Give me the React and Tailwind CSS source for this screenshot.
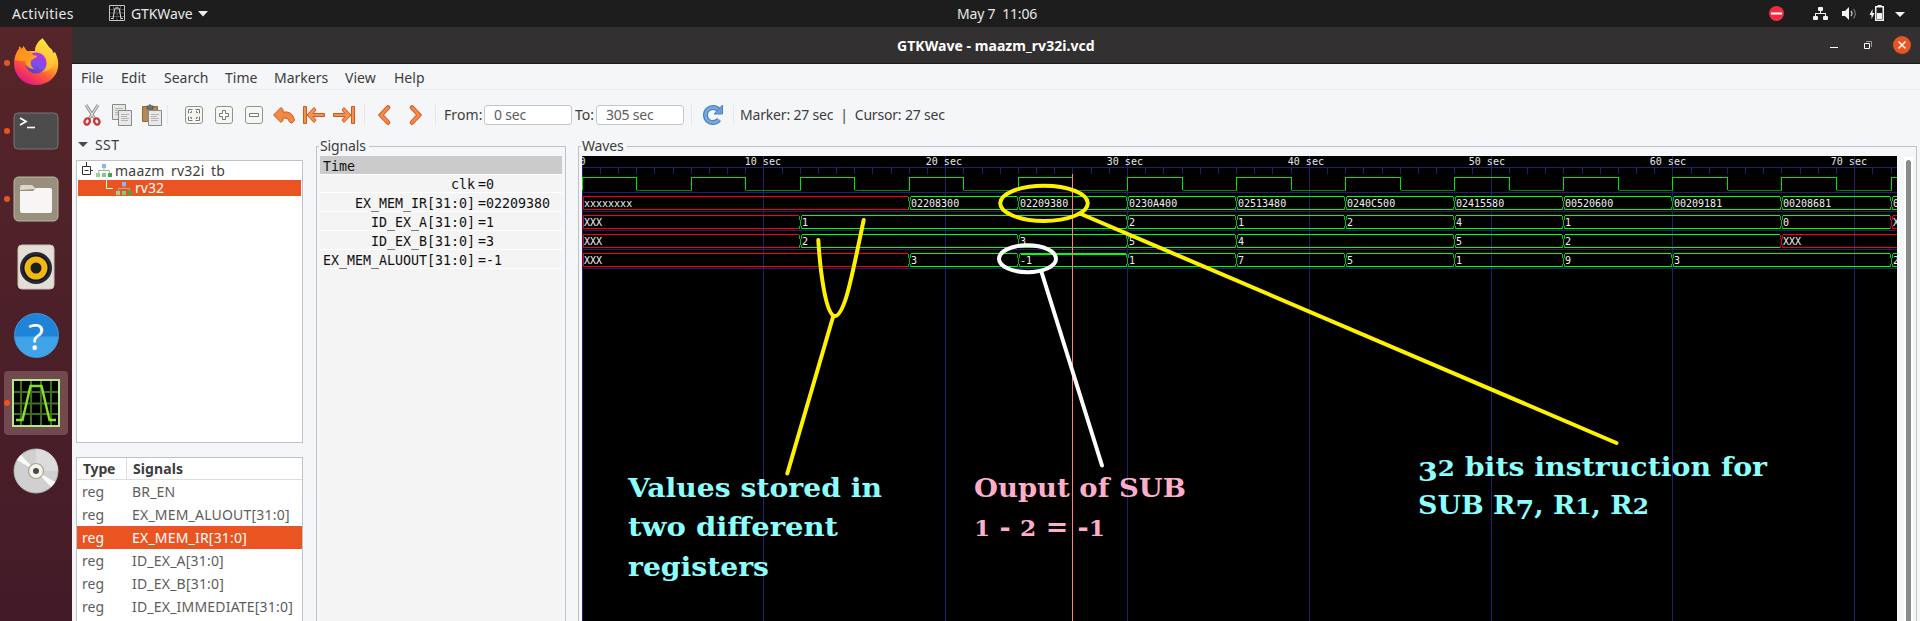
import React from "react";

const PX = 18.18;
const tx = (t) => Math.floor(582.1 + PX * t) + 0.5;
const END = 1896.5;

const buses = [
  {
    top: 196.5,
    segs: [[0, "xxxxxxxx", 1], [18, "02208300"], [24, "02209380"], [30, "0230A400"], [36, "02513480"], [42, "0240C500"], [48, "02415580"], [54, "00520600"], [60, "00209181"], [66, "00208681"], [72, "0"]],
  },
  { top: 215.5, segs: [[0, "XXX", 1], [12, "1"], [30, "2"], [36, "1"], [42, "2"], [48, "4"], [54, "1"], [66, "0"], [72, "X", 1]] },
  { top: 234.5, segs: [[0, "XXX", 1], [12, "2"], [24, "3"], [30, "5"], [36, "4"], [48, "5"], [54, "2"], [66, "XXX", 1]] },
  { top: 253.5, segs: [[0, "XXX", 1], [18, "3"], [24, "-1"], [30, "1"], [36, "7"], [42, "5"], [48, "1"], [54, "9"], [60, "3"], [72, "2"]] },
];

function Bus({ top, segs }) {
  const bot = top + 13;
  return (
    <g>
      {segs.map(([t, label, bad], i) => {
        const x = tx(t);
        const last = i === segs.length - 1;
        const e = last ? END : tx(segs[i + 1][0]) - 1.5;
        const s = i === 0 ? x : x + 1.5;
        const c = bad ? "#ff0000" : "#00ff00";
        const dim = bad ? "#e00000" : "#00c000";
        return (
          <g key={t}>
            <path d={`M${s} ${top}H${e}M${s} ${bot}H${e}`} stroke={c} />
            {i > 0 ? (
              <path
                d={`M${x - 1} ${top}V${top + 4}M${x} ${top + 4}V${bot - 3}M${x - 1} ${bot - 3}V${bot}M${x + 1} ${top}V${top + 4}M${x + 1} ${bot - 3}V${bot}`}
                stroke={dim}
              />
            ) : (
              <path d={`M${x + 0.5} ${top}V${bot}`} stroke={dim} />
            )}
            <text x={x + 1.5} y={top + 10.5} fill="#f2f2f2" stroke="none">{label}</text>
          </g>
        );
      })}
    </g>
  );
}

function Waves() {
  let clk = `M${tx(0)} 190.5`;
  const lows = [];
  for (let t = 0; t <= 72; t += 6) {
    clk += `M${tx(t)} 190V177.5H${Math.min(tx(t + 3), END)}`;
    if (t < 72) {
      clk += `V190`;
      lows.push(`M${tx(t + 3)} 190.5H${tx(t + 6)}`);
    }
  }
  const ticks = Array.from({ length: 73 }, (_, i) => i);
  const decades = [0, 10, 20, 30, 40, 50, 60, 70];
  return (
    <svg className="block bg-black" width="1315" height="465" viewBox="582 156 1315 465" fill="none">
      <g stroke="#20206f" shapeRendering="crispEdges">
        <path d="M582 167.5H1897M582 192.5H1897M582 211.5H1897M582 230.5H1897M582 249.5H1897M582 268.5H1897" />
        {ticks.map((t) => (
          <path key={t} d={`M${tx(t)} 167V174`} />
        ))}
        {decades.map((t) => (
          <path key={t} d={`M${tx(t)} 156V621`} />
        ))}
      </g>
      <g shapeRendering="crispEdges" className="font-['DejaVu_Sans_Mono',monospace] text-[10px]">
        {decades.map((t) => (
          <text key={t} x={t === 0 ? 579.5 : 563.8 + 18.1 * t} y="165" fill="#e8e8e8">{t === 0 ? "0" : `${t} sec`}</text>
        ))}
        <path d={clk} stroke="#00e600" />
        <path d={lows.join("")} stroke="#008800" />
        {buses.map((b) => (
          <Bus key={b.top} {...b} />
        ))}
        <path d={`M${tx(24) + 2} 254.5H${tx(30) - 1}`} stroke="#00ff00" />
        <path d="M1072.5 174V621" stroke="#ff8080" />
      </g>
      <g stroke="#fff200" strokeWidth="4" strokeLinecap="round">
        <ellipse cx="1044" cy="203.3" rx="43.8" ry="17.6" />
        <path d="M1081 214L1616.500 443" />
        <path d="M818.300 240C820 268 825 312 834 316C845 318 853 270 863.700 220" />
        <path d="M833 317L787.300 473.500" />
      </g>
      <g stroke="#ffffff" strokeWidth="4" strokeLinecap="round">
        <ellipse cx="1027.500" cy="258.700" rx="28.500" ry="13.500" />
        <path d="M1041.500 272L1102 465.500" />
      </g>
      <g className="font-['DejaVu_Serif',serif] text-[26.5px] font-bold" fill="#8cffff">
        <text x="628" y="497" textLength="254" lengthAdjust="spacingAndGlyphs">Values stored in</text>
        <text x="628" y="536" textLength="210" lengthAdjust="spacingAndGlyphs">two different</text>
        <text x="628" y="576" textLength="141" lengthAdjust="spacingAndGlyphs">registers</text>
        <text x="1418" y="475.500" textLength="349" lengthAdjust="spacingAndGlyphs">
          <tspan dy="5.5">3</tspan><tspan dy="-5.5" fontSize="23">2</tspan> bits instruction for
        </text>
        <text x="1418" y="514" textLength="231" lengthAdjust="spacingAndGlyphs">
          SUB R<tspan dy="5">7</tspan><tspan dy="-5">, R</tspan><tspan fontSize="23">1</tspan>, R<tspan fontSize="23">2</tspan>
        </text>
        <g fill="#ffaec9">
          <text x="974" y="497" textLength="212" lengthAdjust="spacingAndGlyphs">Ouput of SUB</text>
          <text x="974" y="536" textLength="131" lengthAdjust="spacingAndGlyphs">
            <tspan fontSize="23">1</tspan> - <tspan fontSize="23">2</tspan> = -<tspan fontSize="23">1</tspan>
          </text>
        </g>
      </g>
    </svg>
  );
}

function TopBar() {
  return (
    <header className="flex h-[27px] shrink-0 items-center bg-[#1d1d1d] text-[14px] leading-[22px] text-[#e8e8e8]">
      <span className="w-[97px] pl-3 tracking-[0.35px]">Activities</span>
      <svg className="ml-3 mt-[-1px]" width="16" height="16" fill="none">
        <path d="M.5.5h15v15H.5z" fill="#111" stroke="#c8c8c8" />
        <path d="M4.500 1v14M8 1v14M11.500 1v14M1 4.500h14M1 8h14M1 11.500h14" stroke="#555" />
        <path d="M2 13.500h2L6 3h4l2 10.500h2" stroke="#ddd" />
      </svg>
      <span className="ml-[6px] w-[67px] tracking-[-0.1px]">GTKWave</span>
      <svg width="10" height="6"><path d="M0 0h10L5 5.500z" fill="#eee" /></svg>
      <span className="ml-[749px] w-[120px] whitespace-pre tracking-[-0.2px]">May 7  11:06</span>
      <svg className="ml-auto" width="151" height="26" viewBox="1769 0 151 26">
        <circle cx="1776.500" cy="12.500" r="7.500" fill="#f22c42" />
        <path d="M1771 11.500h11v2h-11z" fill="#fff" />
        <g fill="#f2f2f2">
          <rect x="1818" y="6" width="5" height="4" rx="1" />
          <rect x="1813" y="15" width="5" height="4" rx="1" />
          <rect x="1823" y="15" width="5" height="4" rx="1" />
          <path d="M1815 15v-3h5v-2h1v2h5v3h-1v-2h-9v2z" />
          <path d="M1842 10h3l4-4v13l-4-4h-3z" />
          <path d="M1875 5h9v15h-9zM1876.500 6.500v12h6v-12z" fillRule="evenodd" />
          <path d="M1877 12h5v6h-5zM1877.500 4h4v1h-4zM1872.500 8l-3 6h2v4l3-6h-2z" />
          <path d="M1895 11h10l-5 5z" />
        </g>
        <path d="M1851 10q2 2.500 0 5" stroke="#ccc" fill="none" strokeWidth="1.300" />
        <path d="M1853.500 8q3.500 4.500 0 9.500" stroke="#777" fill="none" strokeWidth="1.200" />
      </svg>
    </header>
  );
}

function Firefox() {
  return (
    <svg className="-mt-[3px]" width="46" height="47" viewBox="0 0 46 47">
      <defs>
        <linearGradient id="ffBody" x1="0.85" y1="0.1" x2="0.3" y2="1">
          <stop offset="0" stopColor="#fff44f" />
          <stop offset=".35" stopColor="#ffb52b" />
          <stop offset=".65" stopColor="#ff5a36" />
          <stop offset="1" stopColor="#e31587" />
        </linearGradient>
        <linearGradient id="ffGlobe" x1=".7" y1="0" x2=".3" y2="1">
          <stop offset="0" stopColor="#b833e1" />
          <stop offset=".6" stopColor="#7b4fe8" />
          <stop offset="1" stopColor="#5b3fb5" />
        </linearGradient>
        <linearGradient id="ffHead" x1="0" y1="0" x2="1" y2="1">
          <stop offset="0" stopColor="#ff8a16" />
          <stop offset="1" stopColor="#ffa92b" />
        </linearGradient>
      </defs>
      <path d="M30 1c3 3 4 6 7 9 2 1 3 3 3 5l2-1c2 4 4 9 3 15-1 10-10 18-22 18S1 38 1 25c0-6 2-10 5-14l0-3 3 3 1-2v-1c2 1 2 3 4 5l8 0c0-5 3-10 8-13z" fill="url(#ffBody)" />
      <circle cx="23" cy="25" r="10.500" fill="url(#ffGlobe)" />
      <path d="M2 22c0-5 2-9 4-11l1-2 2 3 1-3 4 4c3 0 5 2 6 4 2 1 4 0 4 1 0 2-5 3-6 5-1 4 1 6 3 8-5 0-9-4-9-8-3 0-8 0-10-1z" fill="url(#ffHead)" />
      <path d="M22 13c8 1 12 6 12 12 0 4-2 7-5 9 9-1 13-6 13-12 0-8-9-11-12-20-5 2-8 6-8 11z" fill="#ffd43a" opacity=".6" />
    </svg>
  );
}

function Dock() {
  const items = [
    { dot: true, icon: <Firefox /> },
    {
      dot: true,
      icon: (
        <svg width="46" height="38">
          <rect x="1" y="1" width="44" height="36" rx="4" fill="#4c4c4c" stroke="#777" />
          <path d="M7 6l6 3.500L7 13" fill="none" stroke="#fff" strokeWidth="1.800" />
          <path d="M14 15.500h8" stroke="#fff" strokeWidth="1.600" />
        </svg>
      ),
    },
    {
      dot: true,
      icon: (
        <svg width="46" height="46">
          <rect x="1" y="1" width="44" height="44" rx="4.500" fill="#98907c" stroke="#bdb7a6" />
          <path d="M7 14v-3q0-2 2-2h9q2 0 3 2l2 2z" fill="#dcd8cc" />
          <path d="M7 15h13l3-3h14q2 0 2 2v21q0 2-2 2H9q-2 0-2-2z" fill="#f7f6f4" />
        </svg>
      ),
    },
    {
      icon: (
        <svg width="38" height="46">
          <rect x="1" y="1" width="36" height="44" rx="4" fill="#e4dfd6" stroke="#c9c3b7" />
          <circle cx="19" cy="24" r="16" fill="#262634" />
          <circle cx="19" cy="24" r="13" fill="#111118" />
          <circle cx="19" cy="24" r="11.500" fill="#f0b90f" />
          <circle cx="19" cy="24" r="5.500" fill="#1f1f1f" />
        </svg>
      ),
    },
    {
      icon: (
        <div className="flex size-[45px] items-center justify-center rounded-full border border-[#3f9be0] bg-linear-to-b from-[#1f83d8] from-50% to-[#3fa3e8] to-55% font-['Open_Sans',sans-serif] text-[37px] leading-none text-white">
          ?
        </div>
      ),
    },
    {
      dot: true,
      active: true,
      icon: (
        <svg width="48" height="48" fill="none">
          <path d="M1 1h46v46H1z" fill="#000" stroke="#b5e88a" strokeWidth="2" />
          <path d="M9 2v44M19 2v44M29 2v44M39 2v44M2 13h44M2 24.500h44M2 35h44" stroke="#3d6e1c" strokeWidth="2" />
          <path d="M4 41h6.500L18.500 7h11l8 34H44" stroke="#86e02f" strokeWidth="2.400" />
        </svg>
      ),
    },
    {
      icon: (
        <svg width="46" height="46">
          <circle cx="23" cy="23" r="22" fill="#d0d0d0" stroke="#b5b5b5" />
          <path d="M23 23V1a22 22 0 0122 22z" fill="#dcdcdc" />
          <path d="M23 23L4 12a22 22 0 014-5zM23 23l19 11a22 22 0 01-4 5z" fill="#fafafa" />
          <circle cx="23" cy="23" r="7.500" fill="#f4f2ea" stroke="#a9a28e" strokeWidth="1.200" />
          <circle cx="23" cy="23" r="3" fill="#4a4a4a" />
        </svg>
      ),
    },
  ];
  return (
    <nav className="flex w-[72px] shrink-0 flex-col items-center gap-1 bg-linear-to-b from-[#562529] to-[#431b28] pt-1">
      {items.map((it, i) => (
        <div key={i} className={`flex h-16 w-[68px] items-center ${it.active ? "" : ""}`}>
          <div className={`relative ml-[2px] flex size-16 items-center justify-center rounded ${it.active ? "bg-[#71494f]" : ""}`}>
            {it.dot && <span className="absolute left-0 top-[29px] size-[6px] rounded-full bg-[#e95420]" />}
            {it.icon}
          </div>
        </div>
      ))}
    </nav>
  );
}

function TitleBar() {
  return (
    <div className="flex h-[37px] shrink-0 items-center border-b border-[#1c1b1b] bg-[#333031]">
      <h1 className="ml-[825px] w-[260px] text-[14px] font-bold tracking-[0.05px] text-white">GTKWave - maazm_rv32i.vcd</h1>
      <svg className="ml-auto" width="92" height="20" viewBox="1828 35 92 20">
        <path d="M1830 47h8v1h-8z" fill="#fff" />
        <path d="M1864.500 43.500h5v5h-5z" fill="none" stroke="#fff" />
        <path d="M1866 41.500h5.500v5.500" fill="none" stroke="#999" />
        <circle cx="1902" cy="45" r="9" fill="#e95420" />
        <path d="M1898.500 41.500l7 7m0-7l-7 7" stroke="#fff" strokeWidth="1.500" />
      </svg>
    </div>
  );
}

function MenuBar() {
  return (
    <div className="flex h-[26px] shrink-0 items-center border-b border-[#e9eaec] pl-[9px] pt-[2px] text-[14px] text-[#3d3d3d]">
      <span className="w-10">File</span>
      <span className="w-[43px]">Edit</span>
      <span className="w-[61px]">Search</span>
      <span className="w-[49px]">Time</span>
      <span className="w-[71px]">Markers</span>
      <span className="w-[49px]">View</span>
      <span>Help</span>
    </div>
  );
}

const Sep = ({ className }) => <span className={`h-5 w-px shrink-0 bg-[#e6e7ea] ${className}`} />;

const Cell = ({ children }) => (
  <svg className="shrink-0" width="30" height="24" viewBox="-15 -12 30 24" fill="none">
    {children}
  </svg>
);

const KeyCap = () => <rect x="-8.500" y="-8.500" width="17" height="17" rx="2.500" fill="#f6f6f3" stroke="#92938e" />;

const Page = ({ x, y }) => (
  <g transform={`translate(${x} ${y})`}>
    <path d="M.5.5h13v15H.5z" fill="#e8e8e8" stroke="#888a85" />
    <path d="M3 4.500h8M3 6.500h6M3 8.500h8M3 10.500h7" stroke="#b4b4b4" />
  </g>
);

function ToolBar() {
  return (
    <div className="flex h-[50px] shrink-0 items-center pl-[5px] text-[14px] text-[#3d3d3d]">
      <Cell>
        <path d="M-6-10L3 4M6-10L-3 4" stroke="#888a85" strokeWidth="3" />
        <path d="M-6-10L3 4M6-10L-3 4" stroke="#e4e4e2" strokeWidth="1.200" />
        <ellipse cx="-4.800" cy="6.500" rx="2.600" ry="3.200" transform="rotate(25 -4.800 6.500)" stroke="#cc3a3a" strokeWidth="2.400" />
        <ellipse cx="4.800" cy="6.500" rx="2.600" ry="3.200" transform="rotate(-25 4.800 6.500)" stroke="#cc3a3a" strokeWidth="2.400" />
      </Cell>
      <Cell>
        <Page x={-10} y={-11} />
        <Page x={-4} y={-5} />
      </Cell>
      <Cell>
        <path d="M-9.500-8.500h15v15h-15z" fill="#b08a58" stroke="#8f6a35" />
        <path d="M-5-9h2q1-3 2 0h2v3h-6z" fill="#777" stroke="#555" />
        <Page x={-4} y={-5} />
      </Cell>
      <Sep className="mr-[11px]" />
      <Cell>
        <KeyCap />
        <path d="M-5.500-1.500v-4h4M1.500-5.500h4v4M5.500 1.500v4h-4M-1.500 5.500h-4v-4M-2.500-4v1.500h-1.500M2.500-4v1.500h1.500M2.500 4v-1.500h1.500M-2.500 4v-1.500h-1.500" stroke="#777975" />
      </Cell>
      <Cell>
        <KeyCap />
        <path d="M-1.500-4.500h3v3h3v3h-3v3h-3v-3h-3v-3h3z" fill="#fff" stroke="#777975" />
      </Cell>
      <Cell>
        <KeyCap />
        <path d="M-4.500-1.500h9v3h-9z" fill="#fff" stroke="#777975" />
      </Cell>
      <Cell>
        <path d="M-10.500 0L-3-7.500l2 2v2.500H3q6 1 7.500 8.500l-2.500 2.500-2.500-1Q5 3 1 3h-2v2.500l-2 2z" fill="#ef8a45" stroke="#d9541e" strokeLinejoin="round" />
      </Cell>
      <Cell>
        <path d="M-10.500-8.500h3v17h-3zM-7 0L0-7.500 2-5-1-1.500H10.500v3H-1L2 5 0 7.500z" fill="#f09350" stroke="#d9541e" strokeLinejoin="round" />
      </Cell>
      <Cell>
        <path d="M10.500-8.500h-3v17h3zM7 0L0-7.500-2-5 1-1.500H-10.500v3H1L-2 5 0 7.500z" fill="#f09350" stroke="#d9541e" strokeLinejoin="round" />
      </Cell>
      <Sep className="ml-[5px] mr-[4px]" />
      <Cell>
        <path d="M4-7.500L-3 0 4 7.500" stroke="#d9541e" strokeWidth="4.600" strokeLinecap="round" />
        <path d="M4-7.500L-3 0 4 7.500" stroke="#f18d4a" strokeWidth="2.600" strokeLinecap="round" />
      </Cell>
      <span className="w-[2px]" />
      <Cell>
        <path d="M-4-7.500L3 0-4 7.500" stroke="#d9541e" strokeWidth="4.600" strokeLinecap="round" />
        <path d="M-4-7.500L3 0-4 7.500" stroke="#f18d4a" strokeWidth="2.600" strokeLinecap="round" />
      </Cell>
      <Sep className="ml-[4px] mr-[8px]" />
      <span className="w-10 pb-[2px] tracking-[0.1px]">From:</span>
      <span className="h-5 w-[88px] rounded-[3px] border border-[#c4c6cb] bg-white pl-[9px] leading-[17px] tracking-[-0.2px] text-[#5d5d5d]">0 sec</span>
      <span className="w-6 pb-[2px] pl-[3px]">To:</span>
      <span className="h-5 w-[88px] rounded-[3px] border border-[#c4c6cb] bg-white pl-[9px] leading-[17px] tracking-[-0.2px] text-[#5d5d5d]">305 sec</span>
      <Sep className="ml-[7px] mr-[6px]" />
      <Cell>
        <path d="M6 4.500A7.500 7.500 0 115.500-5" stroke="#4a86c5" strokeWidth="5" />
        <path d="M6 4.500A7.500 7.500 0 115.500-5" stroke="#79aadb" strokeWidth="2.500" />
        <path d="M9.500-10v9H1z" fill="#6b9fd6" stroke="#4a86c5" strokeLinejoin="round" />
      </Cell>
      <Sep className="ml-[5px] mr-[6px]" />
      <span className="whitespace-nowrap pb-[2px] tracking-[-0.18px]">Marker: 27 sec&nbsp; |&nbsp; Cursor: 27 sec</span>
    </div>
  );
}

const TreeIcon = () => (
  <svg width="16" height="14" fill="none">
    <path d="M8 4v3M2.500 9.500V7.500h11v2" stroke="#aaa" />
    <path d="M6 1h4v4H6z" fill="#8bb8e8" />
    <path d="M0 10h4v4H0z" fill="#93d693" />
    <path d="M6 10h4v4H6z" fill="#7fcb7f" />
    <path d="M12 10h4v4h-4z" fill="#43a843" />
  </svg>
);

const rows = ["BR_EN", "EX_MEM_ALUOUT[31:0]", "EX_MEM_IR[31:0]", "ID_EX_A[31:0]", "ID_EX_B[31:0]", "ID_EX_IMMEDIATE[31:0]"];

function Sidebar() {
  return (
    <aside className="flex w-[231px] shrink-0 flex-col pl-1 text-[14px] text-[#3d3d3d]">
      <div className="flex h-[21px] items-center pb-[9px]">
        <svg className="ml-[2px] mr-[7px]" width="10" height="6"><path d="M0 0h10L5 5z" fill="#4a4a4a" /></svg>
        <span className="leading-[14px] tracking-[0.4px]">SST</span>
      </div>
      <div className="h-[283px] shrink-0 border border-[#bfc2c9] bg-white px-px pt-px">
        <div className="flex h-[18px] items-start">
          <svg className="ml-1" width="15" height="16" fill="none">
            <path d="M.5 4.500h8v8h-8zM2.500 8.500h4M4.500 0v4M8.500 8.500H11" stroke="#333" />
          </svg>
          <div className="-ml-px mr-[3px] pt-[1px]"><TreeIcon /></div>
          <span className="h-[15px] overflow-hidden leading-[18px] tracking-[0.22px]">maazm_rv32i_tb</span>
        </div>
        <div className="flex h-4 items-center bg-[#e95420] text-white">
          <svg className="ml-[28px] mr-[3px] self-start" width="7" height="10" fill="none"><path d="M.5 0v8.500H7" stroke="#fff" /></svg>
          <TreeIcon />
          <span className="ml-[3px] leading-4">rv32</span>
        </div>
      </div>
      <div className="mt-[14px] flex flex-1 flex-col overflow-hidden border border-b-0 border-[#bfc2c9] bg-white">
        <div className="flex h-[22px] shrink-0 items-center border-b border-[#dcdde0] font-bold">
          <span className="flex h-full w-[50px] items-center border-r border-[#dcdde0] pl-[6px] tracking-[-0.2px]">Type</span>
          <span className="pl-[6px] tracking-[0.1px]">Signals</span>
        </div>
        {rows.map((r) => (
          <div key={r} className={`flex h-[23px] shrink-0 items-center ${r === "EX_MEM_IR[31:0]" ? "bg-[#e95420] text-white" : "text-[#5d5d5d]"}`}>
            <span className="w-[55px] pl-[5px]">reg</span>
            <span className="tracking-[0.2px]">{r}</span>
          </div>
        ))}
      </div>
    </aside>
  );
}

function Frame({ label, className, children }) {
  return (
    <section className={`flex flex-col ${className}`}>
      <div className="flex h-[17px] shrink-0 items-end">
        <span className="h-[10px] w-[3px] border-l border-t border-[#bfc2c9]" />
        <span className="px-px pb-px pr-[3px] text-[14px] leading-[18px] tracking-[-0.15px] text-[#3d3d3d]">{label}</span>
        <span className="h-[10px] flex-1 border-r border-t border-[#bfc2c9]" />
      </div>
      <div className="flex min-h-0 flex-1 border-x border-[#bfc2c9] pl-[3px]">{children}</div>
    </section>
  );
}

const signals = [
  ["clk", "=0"],
  ["EX_MEM_IR[31:0]", "=02209380"],
  ["ID_EX_A[31:0]", "=1"],
  ["ID_EX_B[31:0]", "=3"],
  ["EX_MEM_ALUOUT[31:0]", "=-1"],
];

function SignalList() {
  return (
    <div className="w-[242px] bg-[#f4f4f4] font-['DejaVu_Sans_Mono',monospace] text-[13.3px] text-[#111]">
      <div className="h-[18px] bg-[#cbcbcb] pl-[3px] leading-[22px]">Time</div>
      {signals.map(([n, v], i) => (
        <div key={n} className={`flex border-t border-white ${i === 0 ? "h-[18px] leading-[20px]" : "h-[19px] leading-[22px]"}`}>
          <span className="w-[155px] text-right">{n}</span>
          <span className="pl-[3px]">{v}</span>
        </div>
      ))}
      <div className="border-t border-white" />
    </div>
  );
}

export default function App() {
  return (
    <div className="flex h-[621px] w-[1920px] flex-col overflow-hidden bg-[#f5f6f7] font-['Noto_Sans',sans-serif]">
      <TopBar />
      <div className="flex min-h-0 flex-1">
        <Dock />
        <main className="flex min-w-0 flex-1 flex-col">
          <TitleBar />
          <MenuBar />
          <ToolBar />
          <div className="-mt-px flex min-h-0 flex-1">
            <Sidebar />
            <Frame label="Signals" className="ml-[13px] w-[250px] shrink-0">
              <SignalList />
            </Frame>
            <Frame label="Waves" className="ml-[12px] w-[1339px] shrink-0">
              <Waves />
              <div className="ml-[7px] mt-px w-[9px] bg-white px-[2px] pt-[3px]">
                <div className="h-full rounded-t-full bg-[#8b8b8b]" />
              </div>
            </Frame>
          </div>
        </main>
      </div>
    </div>
  );
}
